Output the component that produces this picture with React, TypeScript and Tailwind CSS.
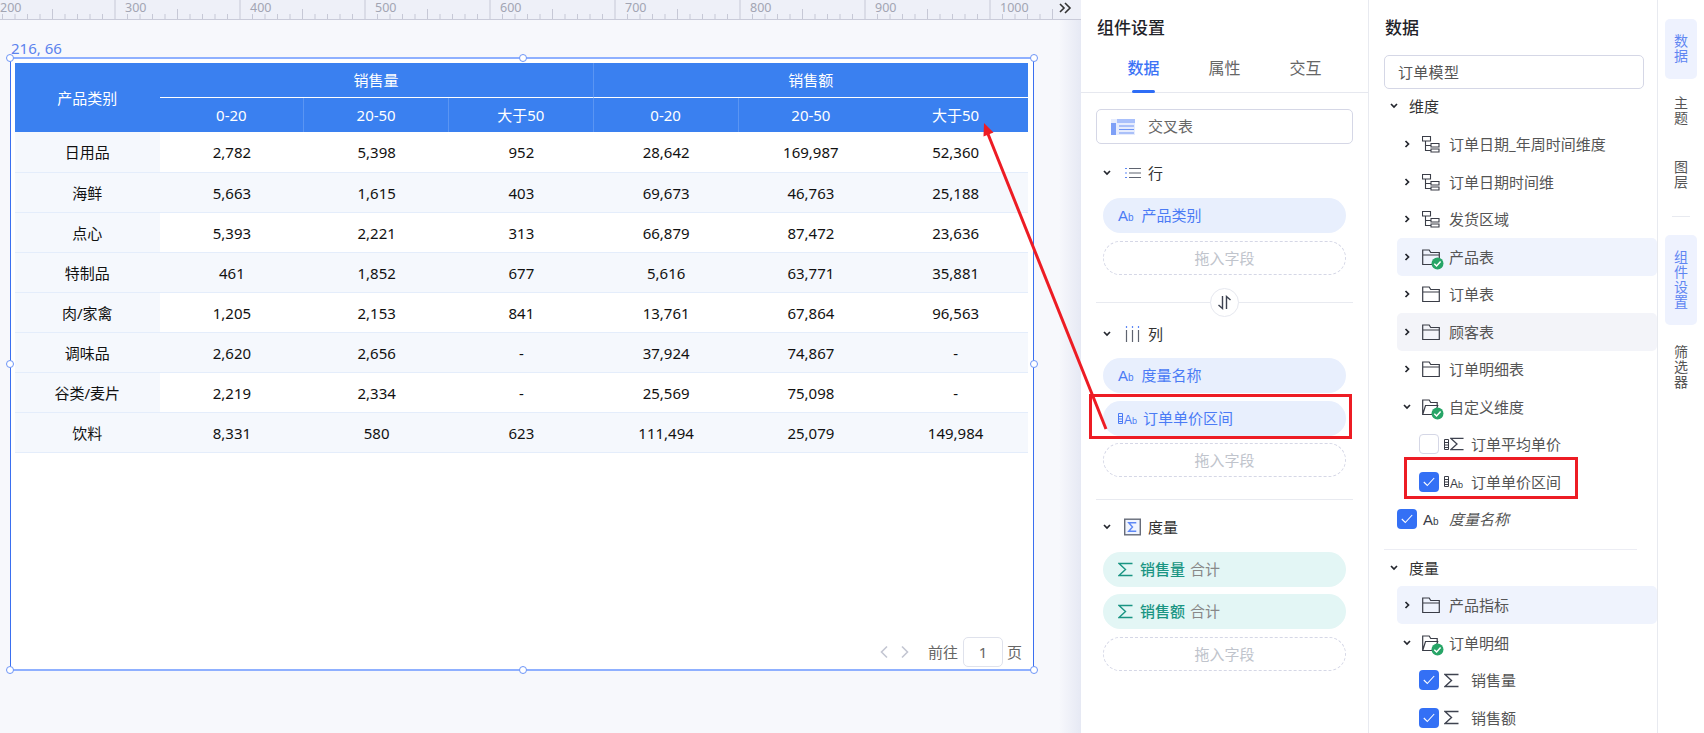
import type { ReactNode } from 'react'

const tableRows = [
  ['日用品', '2,782', '5,398', '952', '28,642', '169,987', '52,360'],
  ['海鲜', '5,663', '1,615', '403', '69,673', '46,763', '25,188'],
  ['点心', '5,393', '2,221', '313', '66,879', '87,472', '23,636'],
  ['特制品', '461', '1,852', '677', '5,616', '63,771', '35,881'],
  ['肉/家禽', '1,205', '2,153', '841', '13,761', '67,864', '96,563'],
  ['调味品', '2,620', '2,656', '-', '37,924', '74,867', '-'],
  ['谷类/麦片', '2,219', '2,334', '-', '25,569', '75,098', '-'],
  ['饮料', '8,331', '580', '623', '111,494', '25,079', '149,984'],
]

const ticks = Array.from({ length: 85 }, (_, i) => i)

function Ruler() {
  return (
    <div className="h-[20px] bg-[#eef0f8] border-b border-[#c9cbd9]">
      <svg width="1081" height="19" className="block">
        {ticks.map(i => {
          const x = 2.5 + i * 12.5
          const h = i % 10 === 9 ? 19 : i % 5 === 4 ? 10 : 5
          if (x > 1055) return null
          return <line key={i} x1={x} x2={x} y1={19 - h} y2={19} stroke="#c6c8d6" strokeWidth="1" />
        })}
        {[200, 300, 400, 500, 600, 700, 800, 900, 1000].map((n, i) => (
          <text key={n} x={i * 125} y="12" fontSize="12.5" fill="#a2a5b3" textAnchor="start" dx="0">
            {n}
          </text>
        ))}
        <path d="M1060 4l4 4-4 4M1065 3l5 5-5 5" fill="none" stroke="#333" strokeWidth="1.6" />
      </svg>
    </div>
  )
}

function Handle({ className }: { className: string }) {
  return <span className={`absolute w-[8px] h-[8px] rounded-full bg-white border-[1.5px] border-[#6d95f7] ${className}`} />
}

function CrossTable() {
  const columns = 'grid grid-cols-[144.5px_repeat(6,144.75px)]'
  return (
    <div className="w-[1013px] text-[15px] leading-[20px]">
      <div className={`${columns} h-[69px] bg-[#3a80f0] text-white`}>
        <div className="row-span-2 flex items-center justify-center">产品类别</div>
        <div className="col-span-3 h-[35px] flex items-center justify-center border-b border-white border-r border-r-[#5a95f3]">销售量</div>
        <div className="col-span-3 h-[35px] flex items-center justify-center border-b border-white">销售额</div>
        {['0-20', '20-50', '大于50', '0-20', '20-50', '大于50'].map((t, i) => (
          <div key={i} className={`h-[34px] flex items-center justify-center ${i < 4 ? 'border-r border-[#5a95f3]' : ''}`}>
            {t}
          </div>
        ))}
      </div>
      {tableRows.map((row, r) => (
        <div key={row[0]} className={`${columns} ${r === 0 ? 'h-[41px]' : 'h-[40px]'} border-b border-[#e4edfb] ${r % 2 ? 'bg-[#f5f8fd]' : 'bg-white'}`}>
          {row.map((cell, c) => (
            <div
              key={c}
              className={`flex items-center justify-center text-[#111] ${c === 0 ? 'bg-[#f5f8fd]' : ''}`}
            >
              {cell}
            </div>
          ))}
        </div>
      ))}
    </div>
  )
}

function Canvas() {
  return (
    <div className="relative w-[1081px] shrink-0 bg-[#f7f8fc]">
      <Ruler />
      <div className="absolute top-[20px] right-0 bottom-0 w-[22px] bg-gradient-to-r from-[#f7f8fc] to-[#e6e9f4]" />
      <div className="absolute left-[11px] top-[39px] text-[15px] leading-[18px] text-[#5b83ee]">216, 66</div>
      <div className="relative ml-[10px] mt-[37px] w-[1024px] h-[614px] bg-white border-x border-[#3a6ff0] border-y-2 border-y-[#8fb0ff] pl-[4px] pt-[4px] flex flex-col">
        <CrossTable />
        <div className="mt-auto mb-[2px] flex items-center justify-end pr-[11px] text-[15px] leading-[20px] text-[#666]">
          <svg width="10" height="14" viewBox="0 0 10 14" className="mr-[11px]">
            <path d="M8 1.5 2.5 7 8 12.5" fill="none" stroke="#c3c6d2" strokeWidth="1.6" />
          </svg>
          <svg width="10" height="14" viewBox="0 0 10 14" className="mr-[18px]">
            <path d="M2 1.5 7.5 7 2 12.5" fill="none" stroke="#c3c6d2" strokeWidth="1.6" />
          </svg>
          <span>前往</span>
          <span className="ml-[5px] w-[40px] h-[30px] rounded-[5px] border border-[#dfe2ec] flex items-center justify-center">1</span>
          <span className="ml-[4px]">页</span>
        </div>
        <Handle className="left-[-5px] top-[-5px]" />
        <Handle className="left-[508px] top-[-5px]" />
        <Handle className="right-[-5px] top-[-5px]" />
        <Handle className="left-[-5px] top-[301px]" />
        <Handle className="right-[-5px] top-[301px]" />
        <Handle className="left-[-5px] bottom-[-5px]" />
        <Handle className="left-[508px] bottom-[-5px]" />
        <Handle className="right-[-5px] bottom-[-5px]" />
      </div>
    </div>
  )
}

function Ab({ color, small }: { color: string; small?: boolean }) {
  return (
    <span className={`inline-flex items-baseline leading-none font-['Liberation_Sans',sans-serif] ${color}`}>
      <span className={small ? 'text-[12px]' : 'text-[15px]'}>A</span>
      <span className={small ? 'text-[9px]' : 'text-[10px]'}>b</span>
    </span>
  )
}

function Bars({ stroke }: { stroke: string }) {
  return (
    <svg width="5" height="11" viewBox="0 0 5 11" className="shrink-0">
      <path d="M.5.5h4v10h-4zM.5 3.5h4M.5 6h4M.5 8.500h4" fill="none" stroke={stroke} strokeWidth="1" />
    </svg>
  )
}

function Sigma({ stroke = '#3f4350', size = 15 }: { stroke?: string; size?: number }) {
  return (
    <svg width={size} height={size} viewBox="0 0 15 15" className="shrink-0">
      <path d="M14.500 1.500H1L7.500 7.500 1 13.500h13.500" fill="none" stroke={stroke} strokeWidth="1.4" />
    </svg>
  )
}

function Chevron({ open }: { open?: boolean }) {
  return (
    <svg width="8" height="8" viewBox="0 0 8 8">
      <path d={open ? 'M1 2l3 3 3-3' : 'M2.500 1l3 3-3 3'} fill="none" stroke="#23262e" strokeWidth="1.700" />
    </svg>
  )
}

function Pill({ tone = 'blue', children }: { tone?: 'blue' | 'teal'; children: ReactNode }) {
  return (
    <div
      className={`h-[35px] rounded-full flex items-center pl-[15px] pb-[1px] text-[15px] leading-[20px] ${
        tone === 'blue' ? 'bg-[#e8effd] text-[#4b7bf5]' : 'bg-[#e3f6f5] text-[#1a9583]'
      }`}
    >
      {children}
    </div>
  )
}

function DropZone() {
  return (
    <div className="h-[34px] rounded-full border border-dashed border-[#d5d7e6] flex items-center justify-center text-[15px] leading-[20px] text-[#c0c4cc]">
      拖入字段
    </div>
  )
}

function SectionHead({ icon, label }: { icon: ReactNode; label: string }) {
  return (
    <div className="h-[24px] flex items-center pl-[22px] text-[15px] text-[#333]">
      <span className="w-[8px] flex justify-center">
        <Chevron open />
      </span>
      <span className="ml-[13px] w-[17px] flex justify-center">{icon}</span>
      <span className="ml-[7px]">{label}</span>
    </div>
  )
}

function SettingsPanel() {
  return (
    <div className="w-[288px] shrink-0 bg-white border-r border-[#e8eaf0]">
      <div className="mt-[16px] pl-[16px] text-[17px] leading-[24px] font-medium text-[#1f2329]">组件设置</div>
      <div className="mt-[4px] h-[49px] flex pl-[22px] border-b border-[#e6e8ef] text-[16px]">
        {['数据', '属性', '交互'].map((t, i) => (
          <div key={t} className={`relative w-[81px] flex items-center justify-center pb-[1px] ${i === 0 ? 'text-[#3d74f6] font-medium' : 'text-[#666]'}`}>
            {t}
            {i === 0 && <span className="absolute bottom-[-1px] left-[29px] w-[23px] h-[3px] rounded-full bg-[#2e6df6]" />}
          </div>
        ))}
      </div>
      <div className="mx-[15px] mt-[16px] h-[35px] rounded-[5px] border border-[#d5d7e6] flex items-center pl-[14px] text-[15px] text-[#666]">
        <svg width="24" height="16" viewBox="0 0 24 16">
          <rect x="0" y="0" width="24" height="16" fill="#e6ecfd" />
          <rect x="6" y="0" width="18" height="4" fill="#a9c0fb" />
          <rect x="0" y="4" width="5" height="12" fill="#7ea0f7" />
          <path d="M8 7h15M8 10.500h15M8 14h15" stroke="#6e94f5" strokeWidth="1.200" />
        </svg>
        <span className="ml-[13px]">交叉表</span>
      </div>
      <div className="mt-[17px]">
        <SectionHead
          label="行"
          icon={
            <svg width="16" height="12" viewBox="0 0 16 12">
              <path d="M0 1.500h2M0 6h2M0 10.500h2" stroke="#5d87f5" strokeWidth="1.200" />
              <path d="M4 1.500h12M4 6h12M4 10.500h12" stroke="#5f6470" strokeWidth="1.200" />
            </svg>
          }
        />
      </div>
      <div className="mx-[22px] mt-[13px] w-[243px]">
        <Pill>
          <Ab color="text-[#4b7bf5]" />
          <span className="ml-[8px]">产品类别</span>
        </Pill>
        <div className="mt-[8px]">
          <DropZone />
        </div>
      </div>
      <div className="relative mx-[15px] mt-[27px] h-[1px] bg-[#e8eaf0]">
        <div className="absolute left-[114px] top-[-14px] w-[29px] h-[29px] rounded-full bg-white border border-[#e6e8ef] flex items-center justify-center">
          <svg width="15" height="15" viewBox="0 0 15 15">
            <path d="M5.500 1v12.500L1.500 10M9.500 14V1.500L13.500 5" fill="none" stroke="#3d4250" strokeWidth="1.400" />
          </svg>
        </div>
      </div>
      <div className="mt-[19px]">
        <SectionHead
          label="列"
          icon={
            <svg width="15" height="16" viewBox="0 0 15 16">
              <path d="M1.500 0v2M7.500 0v2M13.500 0v2" stroke="#5d87f5" strokeWidth="1.200" />
              <path d="M1.500 4v12M7.500 4v12M13.500 4v12" stroke="#5f6470" strokeWidth="1.200" />
            </svg>
          }
        />
      </div>
      <div className="mx-[22px] mt-[12px] w-[243px]">
        <Pill>
          <Ab color="text-[#4b7bf5]" />
          <span className="ml-[8px]">度量名称</span>
        </Pill>
        <div className="mt-[8px]">
          <Pill>
            <span className="flex items-center">
              <Bars stroke="#4b7bf5" />
              <span className="ml-[1px]">
                <Ab color="text-[#4b7bf5]" small />
              </span>
            </span>
            <span className="ml-[6px]">订单单价区间</span>
          </Pill>
        </div>
        <div className="mt-[7px]">
          <DropZone />
        </div>
      </div>
      <div className="mx-[15px] mt-[22px] h-[1px] bg-[#e8eaf0]" />
      <div className="mt-[15px]">
        <SectionHead
          label="度量"
          icon={
            <svg width="18" height="18" viewBox="0 0 18 18">
              <rect x=".75" y=".75" width="16.500" height="16.500" fill="#f0f4fe" stroke="#676c7a" strokeWidth="1.500" />
              <path d="M13 4.500H5L9 9l-4 4.500h8" fill="none" stroke="#5d87f5" strokeWidth="1.500" />
            </svg>
          }
        />
      </div>
      <div className="mx-[22px] mt-[13px] w-[243px]">
        {['销售量', '销售额'].map((t, i) => (
          <div key={t} className={i ? 'mt-[7px]' : ''}>
            <Pill tone="teal">
              <Sigma stroke="#1a9583" />
              <span className="ml-[7px] font-medium">{t}</span>
              <span className="ml-[5px] text-[#888]">合计</span>
            </Pill>
          </div>
        ))}
        <div className="mt-[8px]">
          <DropZone />
        </div>
      </div>
    </div>
  )
}

function TreeIcon() {
  return (
    <svg width="18" height="18" viewBox="0 0 18 18" className="shrink-0">
      <path d="M.5 1.500h8v4.500h-8zM3.500 6v9.500h5M3.500 10.500h5M9 8.500h8v3.500H9zM9 14h8v3H9z" fill="none" stroke="#3a3d47" strokeWidth="1.100" />
    </svg>
  )
}

function FolderIcon({ open, checked }: { open?: boolean; checked?: boolean }) {
  return (
    <span className="relative w-[18px] h-[18px] shrink-0">
      <svg width="18" height="18" viewBox="0 0 18 18">
        {open ? (
          <path d="M.7 16.500V2h6.500l1.500 2.500h6.500v3M.7 16.500h12l3-9H3.500z" fill="none" stroke="#3a3d47" strokeWidth="1.200" />
        ) : (
          <path d="M.7 2h6.500l1.500 2.500h8.600v12H.7zM.7 7h16.600" fill="none" stroke="#3a3d47" strokeWidth="1.200" />
        )}
      </svg>
      {checked && (
        <svg width="13" height="13" viewBox="0 0 13 13" className="absolute left-[9px] top-[9px]">
          <circle cx="6.500" cy="6.500" r="6" fill="#27a567" />
          <path d="M3.300 6.700 5.600 9l4-4.400" fill="none" stroke="#fff" strokeWidth="1.500" />
        </svg>
      )}
    </span>
  )
}

function Check({ on = true }: { on?: boolean }) {
  if (!on) return <span className="w-[20px] h-[20px] shrink-0 rounded-[4px] border border-[#d5d7e6] bg-white" />
  return (
    <span className="w-[20px] h-[20px] shrink-0 rounded-[4px] bg-[#3470f5] flex items-center justify-center">
      <svg width="12" height="10" viewBox="0 0 12 10">
        <path d="M.8 5 4.300 8.500 11.200 1" fill="none" stroke="#fff" strokeWidth="1.100" />
      </svg>
    </span>
  )
}

function TreeRow({ label, icon, open, bg = '', h = 'h-[37.5px]' }: { label: string; icon: ReactNode; open?: boolean; bg?: string; h?: string }) {
  return (
    <div className={`${h} ml-[28px] flex items-center rounded-[5px] pl-[6px] ${bg}`}>
      <span className="w-[8px] flex justify-center">
        <Chevron open={open} />
      </span>
      <span className="ml-[11px] flex">{icon}</span>
      <span className="ml-[9px]">{label}</span>
    </div>
  )
}

function LeafRow({ label, icon, on, h = 'h-[37.5px]' }: { label: string; icon: ReactNode; on?: boolean; h?: string }) {
  return (
    <div className={`${h} ml-[50px] flex items-center`}>
      <Check on={on} />
      <span className="ml-[5px] w-[20px] flex items-center">{icon}</span>
      <span className="ml-[7px]">{label}</span>
    </div>
  )
}

function DataPanel() {
  return (
    <div className="w-[289px] shrink-0 bg-white border-r border-[#e8eaf0] text-[15px] leading-[20px] text-[#555]">
      <div className="mt-[16px] pl-[16px] text-[17px] leading-[24px] font-medium text-[#1f2329]">数据</div>
      <div className="ml-[15px] mt-[15px] w-[260px] h-[34px] rounded-[5px] border border-[#d5d7e6] flex items-center pl-[13px] tracking-[0.3px]">订单模型</div>
      <div className="-mt-[1px] h-[37.5px] flex items-center pb-[2px] pl-[21px] text-[#333]">
        <span className="w-[8px] flex justify-center">
          <Chevron open />
        </span>
        <span className="ml-[11px]">维度</span>
      </div>
      <TreeRow label="订单日期_年周时间维度" icon={<TreeIcon />} />
      <TreeRow label="订单日期时间维" icon={<TreeIcon />} />
      <TreeRow label="发货区域" icon={<TreeIcon />} />
      <TreeRow label="产品表" icon={<FolderIcon checked />} bg="bg-[#eff3fd]" />
      <TreeRow label="订单表" icon={<FolderIcon />} />
      <TreeRow label="顾客表" icon={<FolderIcon />} bg="bg-[#f3f4f9]" />
      <TreeRow label="订单明细表" icon={<FolderIcon />} />
      <TreeRow label="自定义维度" icon={<FolderIcon open checked />} open />
      <LeafRow
        label="订单平均单价"
        on={false}
        icon={
          <>
            <Bars stroke="#3a3d47" />
            <span className="ml-[1px]">
              <Sigma size={14} />
            </span>
          </>
        }
      />
      <LeafRow
        label="订单单价区间"
        on
        icon={
          <>
            <Bars stroke="#3a3d47" />
            <span className="ml-[1px]">
              <Ab color="text-[#3a3d47]" small />
            </span>
          </>
        }
      />
      <div className="h-[37.5px] ml-[28px] flex items-center">
        <Check />
        <span className="ml-[6px] w-[20px] flex">
          <Ab color="text-[#3a3d47]" />
        </span>
        <span className="ml-[6px] italic">度量名称</span>
      </div>
      <div className="ml-[15px] mt-[11px] w-[253px] h-[1px] bg-[#ecedf4]" />
      <div className="h-[36px] flex items-center pl-[21px] text-[#333]">
        <span className="w-[8px] flex justify-center">
          <Chevron open />
        </span>
        <span className="ml-[11px]">度量</span>
      </div>
      <TreeRow label="产品指标" icon={<FolderIcon />} bg="bg-[#eff3fd]" h="h-[38px]" />
      <TreeRow label="订单明细" icon={<FolderIcon open checked />} open h="h-[37.5px]" />
      <LeafRow label="销售量" on icon={<Sigma />} />
      <LeafRow label="销售额" on icon={<Sigma />} />
    </div>
  )
}

function VerticalTab({ label, active, className }: { label: string; active?: boolean; className: string }) {
  return (
    <div
      className={`w-[32px] ml-[7px] rounded-[5px] flex items-center justify-center pb-[2px] text-[14px] leading-[15px] ${
        active ? 'bg-[#eef2fe] text-[#5f86f2]' : 'text-[#555]'
      } ${className}`}
    >
      <span className="w-[14px] text-center break-all">{label}</span>
    </div>
  )
}

function SideRail() {
  return (
    <div className="w-[46px] shrink-0 bg-white">
      <VerticalTab label="数据" active className="mt-[19px] h-[60px]" />
      <VerticalTab label="主题" className="mt-[17px] h-[30px]" />
      <VerticalTab label="图层" className="mt-[34px] h-[30px]" />
      <div className="ml-[14px] mt-[26px] w-[18px] h-[1px] bg-[#e8eaf0]" />
      <VerticalTab label="组件设置" active className="mt-[18px] h-[90px]" />
      <VerticalTab label="筛选器" className="mt-[20px] h-[45px]" />
    </div>
  )
}

export default function App() {
  return (
    <div className="relative w-[1704px] h-[733px] overflow-hidden flex bg-white font-['Noto_Sans','Noto_Sans_CJK_SC',sans-serif]">
      <Canvas />
      <SettingsPanel />
      <DataPanel />
      <SideRail />
      {/* red annotations drawn over the screenshot */}
      <div className="absolute left-[1089px] top-[394px] w-[263px] h-[45px] border-[3px] border-[#ed1c24]" />
      <div className="absolute left-[1404px] top-[457px] w-[174px] h-[42px] border-[3px] border-[#ed1c24]" />
      <svg width="1704" height="733" className="absolute left-0 top-0 pointer-events-none">
        <line x1="1106" y1="429" x2="988" y2="134" stroke="#ed1c24" strokeWidth="3" />
        <path d="M984 123l9.500 9.500-10 4z" fill="#ed1c24" />
      </svg>
    </div>
  )
}
